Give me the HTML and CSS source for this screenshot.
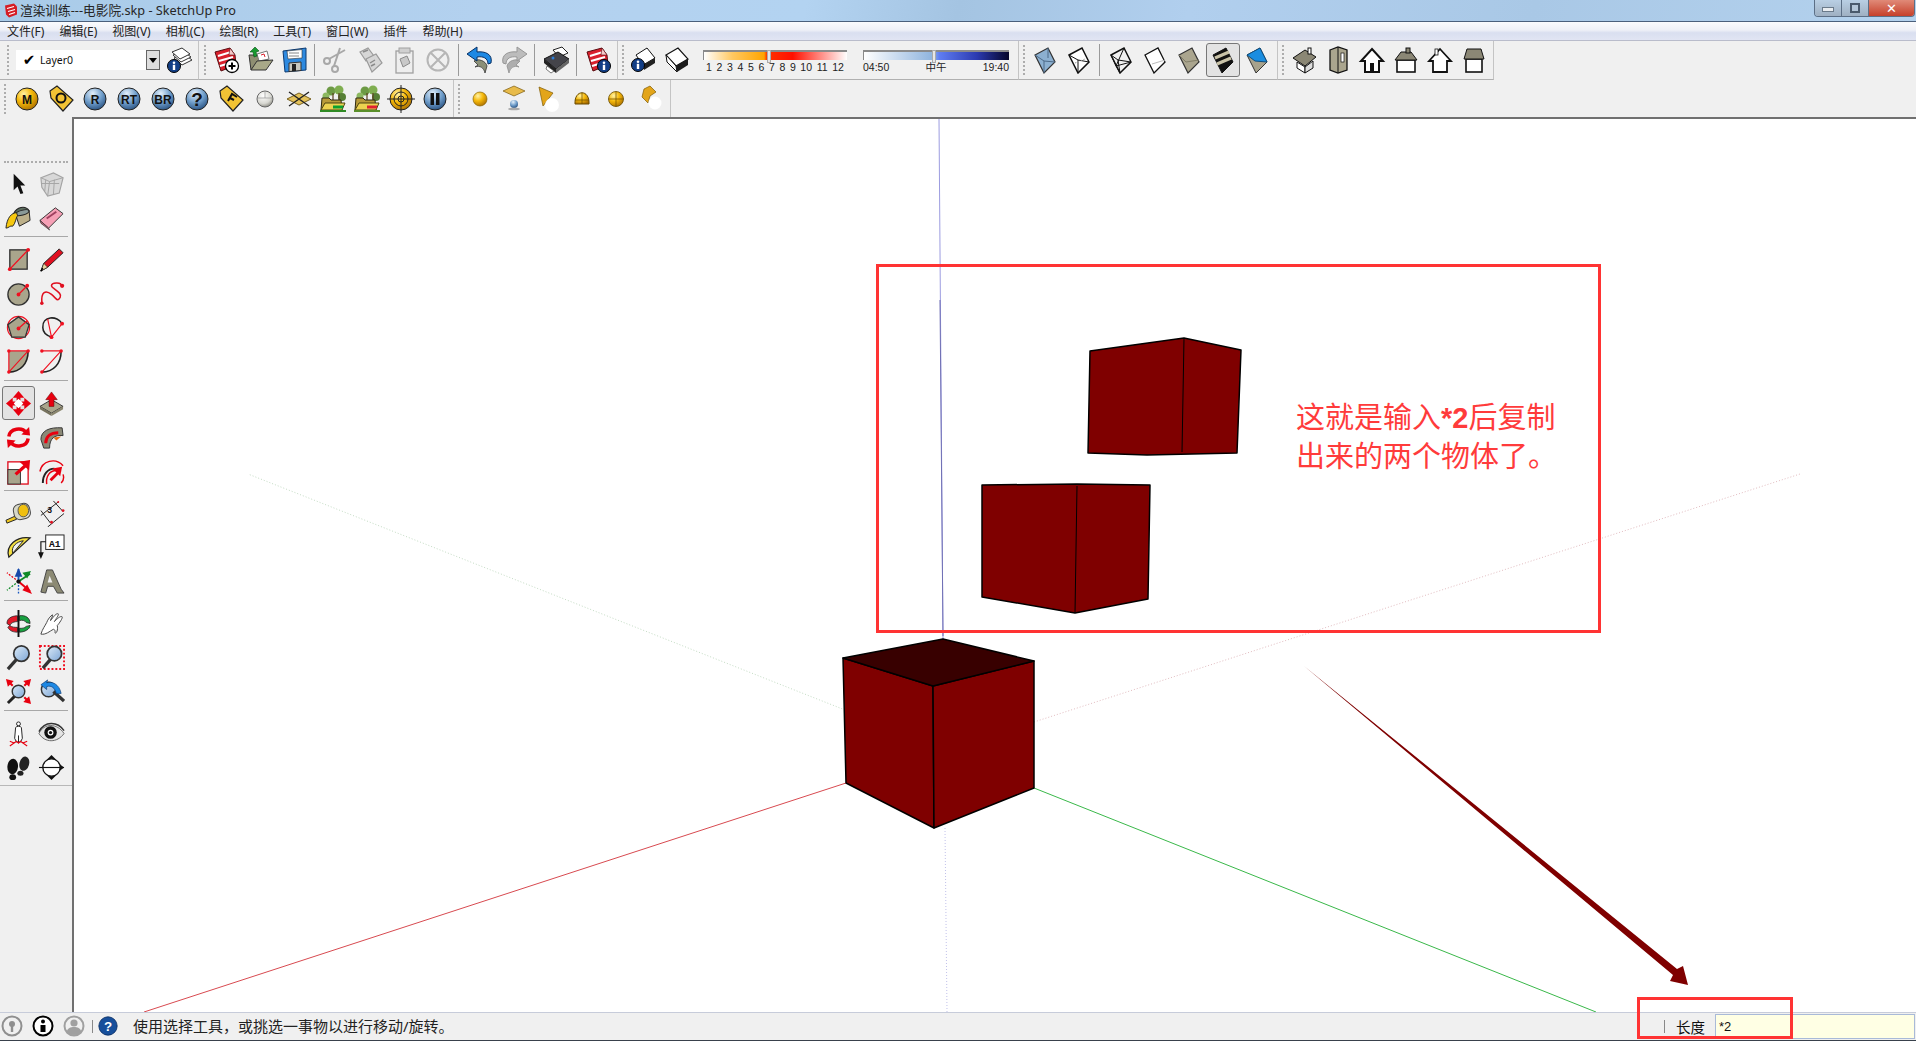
FILE: index.html
```html
<!DOCTYPE html>
<html lang="zh">
<head>
<meta charset="utf-8">
<title>渲染训练---电影院.skp - SketchUp Pro</title>
<link rel="stylesheet" href="styles.css">
</head>
<body>
<svg class="sprite" aria-hidden="true">
<defs>
<radialGradient id="gGold" cx=".35" cy=".28" r=".8"><stop offset="0" stop-color="#fff3a8"/><stop offset=".45" stop-color="#f6b90a"/><stop offset="1" stop-color="#a86c00"/></radialGradient>
<radialGradient id="gBlue" cx=".4" cy=".25" r=".85"><stop offset="0" stop-color="#e4f0fa"/><stop offset=".5" stop-color="#6f9dca"/><stop offset="1" stop-color="#1c4474"/></radialGradient>
<radialGradient id="gGray" cx=".4" cy=".3" r=".8"><stop offset="0" stop-color="#fff"/><stop offset=".6" stop-color="#d8d8d2"/><stop offset="1" stop-color="#77776e"/></radialGradient>
<linearGradient id="gLens" x1="0" y1="0" x2="1" y2="1"><stop offset="0" stop-color="#dcebf8"/><stop offset="1" stop-color="#7da6d6"/></linearGradient>
<g id="bi"><circle r="6.5" fill="#123e86" stroke="#000"/><circle cy="-3.2" r="1.3" fill="#fff"/><rect x="-1.2" y="-1.2" width="2.4" height="5.2" fill="#fff"/></g>
<g id="rdoc"><polygon points="3,6 18,2 23,9 24,19 9,25" fill="#d9202c" stroke="#5a0c10"/><path d="M6,10 19,6M7,15 21,11M8,20 21,16" stroke="#fff" stroke-width="2"/><polygon points="18,2 23,9 17,9" fill="#f5c9c9" stroke="#5a0c10" stroke-width=".6"/></g>
<g id="tree"><circle cx="12" cy="6" r="4.5" fill="#6d9a45"/><circle cx="20" cy="5" r="4.5" fill="#7fae50"/><circle cx="23" cy="12" r="4" fill="#567f35"/><circle cx="7" cy="11" r="3.5" fill="#8cb860"/><path d="M14,8v8M20,8v8" stroke="#5a4020" stroke-width="1.2"/><polygon points="2,25 3,13 10,13 12,15 22,15 23,25" fill="#b89a3a" stroke="#2c2810"/><polygon points="2,25 6,18 26,18 23,25" fill="#ecd250" stroke="#4d4410"/></g>

<symbol id="layers" viewBox="0 0 28 28"><g fill="#fff" stroke="#333"><polygon points="9,12 19,8 27,14 17,19"/><polygon points="8,9 18,5 26,11 16,16"/><polygon points="7,6 17,2 25,8 15,13"/></g><use href="#bi" x="9" y="20"/></symbol>
<symbol id="new" viewBox="0 0 28 28"><use href="#rdoc"/><circle cx="20" cy="20" r="6.5" fill="#fff" stroke="#000" stroke-width="1.3"/><path d="M20,16.5v7M16.5,20h7" stroke="#000" stroke-width="2"/></symbol>
<symbol id="open" viewBox="0 0 28 28"><polygon points="5,24 3,9 10,9 12,11 21,11 22,15 12,16" fill="#8f8f72" stroke="#333"/><polygon points="11,8 21,5 23,13 13,15" fill="#fff" stroke="#777"/><path d="M15,9l3-1 1,3" stroke="#d9202c" fill="none"/><polygon points="9,1 4,6 7,6 8,11 11,10 10,6 13,5" fill="#189a30" stroke="#084d14" stroke-width=".6"/><polygon points="5,24 11,15 27,14 20,24" fill="#a8a888" stroke="#333"/></symbol>
<symbol id="save" viewBox="0 0 28 28"><polygon points="3,5 26,2 26,24 5,26" fill="#2e8ae0" stroke="#0d3a70"/><polygon points="7,5 22,3.5 22,12 8,13" fill="#fff" stroke="#333" stroke-width=".6"/><path d="M9,7h10M9,10h10" stroke="#888"/><polygon points="9,17 21,16 21,24.5 9,25.5" fill="#c8c8c0" stroke="#333"/><rect x="12" y="18" width="4" height="7" fill="#222"/></symbol>
<symbol id="cut" viewBox="0 0 28 28"><g fill="none" stroke="#a8a8a8" stroke-width="2"><circle cx="5" cy="15" r="3"/><circle cx="13" cy="23" r="3"/><path d="M7,13 23,4M12,20 18,2"/></g></symbol>
<symbol id="copy" viewBox="0 0 28 28"><g fill="#d6d6d6" stroke="#9a9a9a" stroke-width="1.2"><polygon points="4,6 12,2 18,10 10,15"/><polygon points="10,13 20,8 26,17 16,26"/></g><path d="M7,6l5-2M14,17l5-3M15,20l4-2" stroke="#8a8a8a" stroke-width="1.4"/></symbol>
<symbol id="paste" viewBox="0 0 28 28"><rect x="6" y="5" width="17" height="22" fill="#eee" stroke="#a0a0a0" stroke-width="1.3"/><rect x="9" y="2" width="11" height="5" fill="#d0d0d0" stroke="#a0a0a0"/><polygon points="10,13 17,10 20,17 13,21" fill="#c8c8c8" stroke="#8a8a8a"/></symbol>
<symbol id="del" viewBox="0 0 28 28"><g fill="none" stroke="#b6b6b6" stroke-width="2"><circle cx="14" cy="14" r="10.5"/><path d="M7,7 21,21M21,7 7,21"/></g></symbol>
<symbol id="undo" viewBox="0 0 28 28"><path d="M8,15c4,-3 12,0 13,5l-2,7c-1,-5 -5,-8 -10,-6l3,-2z" fill="#8b9078" stroke="#333" stroke-width=".8"/><path d="M11,1 1,8l10,7 0,-4c6,-1 11,1 11,7l3,-1c2,-9 -6,-12 -14,-11z" fill="#1c88e4" stroke="#072f62"/></symbol>
<symbol id="redo" viewBox="0 0 28 28"><g transform="matrix(-1 0 0 1 28 0)"><path d="M8,15c4,-3 12,0 13,5l-2,7c-1,-5 -5,-8 -10,-6l3,-2z" fill="#aeaeae" stroke="#8e8e8e" stroke-width=".8"/><path d="M11,1 1,8l10,7 0,-4c6,-1 11,1 11,7l3,-1c2,-9 -6,-12 -14,-11z" fill="#bcbcbc" stroke="#969696"/></g></symbol>
<symbol id="print" viewBox="0 0 28 28"><polygon points="11,4 20,1 26,7 17,11" fill="#fff" stroke="#222"/><polygon points="2,13 16,6 27,13 14,23" fill="#44444a" stroke="#111"/><polygon points="2,13 14,23 14,27 2,17" fill="#222"/><polygon points="14,23 27,13 27,17 14,27" fill="#666"/><circle cx="11" cy="12" r="1.5" fill="#2c7ed8"/><polygon points="5,20 12,25 9,27 4,23" fill="#fff" stroke="#222" stroke-width=".6"/></symbol>
<symbol id="minfo" viewBox="0 0 28 28"><use href="#rdoc"/><use href="#bi" x="20" y="20"/></symbol>
<symbol id="boxi" viewBox="0 0 28 28"><polygon points="7,9 18,2 26,12 14,19" fill="#fff" stroke="#111"/><polygon points="14,19 26,12 26,17 15,24" fill="#222"/><use href="#bi" x="9" y="19"/></symbol>
<symbol id="boxw" viewBox="0 0 28 28"><polygon points="3,9 15,2 25,13 13,20" fill="#fff" stroke="#111" stroke-width="1.2"/><polygon points="3,9 13,20 14,26 4,16" fill="#fff" stroke="#111"/><polygon points="13,20 25,13 25,19 14,26" fill="#1c1c1c"/></symbol>

<symbol id="xray" viewBox="0 0 28 28"><polygon points="4,9 17,2 24,16 13,27" fill="#8cb0d0" stroke="#333" stroke-width="1.2"/><path d="M4,9 13,15 24,16M13,15 13,27M17,2 17,12" stroke="#4d6a88" fill="none"/></symbol>
<symbol id="back" viewBox="0 0 28 28"><polygon points="4,9 17,2 24,16 13,27" fill="#fff" stroke="#111" stroke-width="1.5"/><path d="M4,9 13,14M13,14 13,27M13,14 24,16" stroke="#111" fill="none"/><path d="M10,17 20,13" stroke="#999" stroke-dasharray="1.5 1.5"/></symbol>
<symbol id="wire" viewBox="0 0 28 28"><polygon points="4,9 17,2 24,16 13,27" fill="none" stroke="#111" stroke-width="1.5"/><path d="M4,9 11,14 24,16M11,14 13,27M17,2 9,20M4,9 9,20 13,27M9,20 24,16" stroke="#111" fill="none"/></symbol>
<symbol id="hidden" viewBox="0 0 28 28"><polygon points="4,9 17,2 24,16 13,27" fill="#fff" stroke="#111" stroke-width="1.3"/><path d="M11,18 24,14" stroke="#bbb"/></symbol>
<symbol id="shaded" viewBox="0 0 28 28"><polygon points="4,9 17,2 24,16 13,27" fill="#aaa58e" stroke="#333" stroke-width="1.2"/><path d="M4,9 11,16 24,14" stroke="#827e68" fill="none"/></symbol>
<symbol id="striped" viewBox="0 0 28 28"><polygon points="4,9 17,2 24,16 13,27" fill="#111" stroke="#111"/><path d="M6,12 20,6M8,18 22,12" stroke="#c9c3a8" stroke-width="3.2"/></symbol>
<symbol id="mono" viewBox="0 0 28 28"><polygon points="4,9 17,2 24,16 13,27" fill="#a7a28c" stroke="#333"/><polygon points="4,9 17,2 24,16 12,15" fill="#1a8de0" stroke="#0e4f80"/></symbol>

<symbol id="hiso" viewBox="0 0 28 28"><polygon points="7,16 15,21 15,27 7,22" fill="#fff" stroke="#111"/><polygon points="15,21 23,15 23,22 15,27" fill="#ddd" stroke="#111"/><polygon points="3,12 15,4 26,11 15,20" fill="#8b8775" stroke="#111"/><rect x="18" y="2" width="3" height="6" fill="#fff" stroke="#111"/></symbol>
<symbol id="hside" viewBox="0 0 28 28"><polygon points="6,4 14,1 23,4 23,24 14,27 6,24" fill="#aaa58e" stroke="#111" stroke-width="1.3"/><path d="M14,1v26" stroke="#111"/><rect x="17" y="7" width="3" height="9" fill="#fff" stroke="#111" stroke-width=".7"/></symbol>
<symbol id="hfront" viewBox="0 0 28 28"><polygon points="14,3 25,15 21,15 21,26 7,26 7,15 3,15" fill="#fff" stroke="#111" stroke-width="2"/><rect x="12" y="17" width="4" height="9" fill="#111"/></symbol>
<symbol id="hback" viewBox="0 0 28 28"><rect x="5" y="14" width="18" height="12" fill="#fff" stroke="#111" stroke-width="1.6"/><polygon points="3,14 9,6 19,6 25,14" fill="#8b8775" stroke="#111"/><rect x="14" y="2" width="4" height="5" fill="#8b8775" stroke="#111"/></symbol>
<symbol id="hleft" viewBox="0 0 28 28"><polygon points="14,3 25,15 21,15 21,26 7,26 7,15 3,15" fill="#fff" stroke="#111" stroke-width="1.8"/><rect x="9" y="3" width="3" height="6" fill="#fff" stroke="#111" stroke-width=".8"/></symbol>
<symbol id="hright" viewBox="0 0 28 28"><rect x="6" y="13" width="16" height="13" fill="#fff" stroke="#111" stroke-width="1.6"/><polygon points="4,13 7,3 21,3 24,13" fill="#8b8775" stroke="#111"/></symbol>

<symbol id="sM" viewBox="0 0 28 28"><circle cx="14" cy="14" r="11" fill="url(#gGold)" stroke="#222"/><text class="ict" x="14" y="19" text-anchor="middle">M</text></symbol>
<symbol id="sR" viewBox="0 0 28 28"><circle cx="14" cy="14" r="11" fill="url(#gBlue)" stroke="#222"/><text class="ict" x="14" y="19" text-anchor="middle">R</text></symbol>
<symbol id="sRT" viewBox="0 0 28 28"><circle cx="14" cy="14" r="11" fill="url(#gBlue)" stroke="#222"/><text class="ict" x="14" y="19" text-anchor="middle">RT</text></symbol>
<symbol id="sBR" viewBox="0 0 28 28"><circle cx="14" cy="14" r="11" fill="url(#gBlue)" stroke="#222"/><text class="ict" x="14" y="19" text-anchor="middle">BR</text></symbol>
<symbol id="sQ" viewBox="0 0 28 28"><circle cx="14" cy="14" r="11" fill="url(#gBlue)" stroke="#222"/><text class="ictq" x="14" y="21" text-anchor="middle">?</text></symbol>
<symbol id="tagO" viewBox="0 0 28 28"><polygon points="3,6 10,1 26,15 16,26 4,13" fill="#f2c334" stroke="#222" stroke-width="1.2"/><circle cx="14" cy="13" r="4.5" fill="none" stroke="#111" stroke-width="2"/></symbol>
<symbol id="tagF" viewBox="0 0 28 28"><polygon points="3,6 10,1 26,15 16,26 4,13" fill="#f2c334" stroke="#222" stroke-width="1.2"/><path d="M11,16 15,9 20,12M13,13l4,2" fill="none" stroke="#111" stroke-width="2"/></symbol>
<symbol id="sWhite" viewBox="0 0 28 28"><circle cx="14" cy="14" r="8" fill="url(#gGray)" stroke="#666"/><path d="M7,13h14M14,6v7" stroke="#999" stroke-width=".7"/></symbol>
<symbol id="plane" viewBox="0 0 28 28"><polygon points="2,14 14,8 26,14 14,20" fill="#e4c25a" stroke="#776020"/><path d="M4,7 24,21M24,7 4,21" stroke="#222" stroke-width="1.4"/></symbol>
<symbol id="treeG" viewBox="0 0 28 28"><use href="#tree"/><path d="M14,22h10" stroke="#0ca030" stroke-width="3"/><rect x="1" y="25" width="26" height="2" fill="#2f8a24"/></symbol>
<symbol id="treeR" viewBox="0 0 28 28"><use href="#tree"/><path d="M14,22h10" stroke="#e02030" stroke-width="3"/><rect x="1" y="25" width="26" height="2" fill="#5a8f2a"/></symbol>
<symbol id="target" viewBox="0 0 28 28"><circle cx="14" cy="14" r="11" fill="url(#gGold)" stroke="#222"/><g fill="none" stroke="#222"><circle cx="14" cy="14" r="7"/><circle cx="14" cy="14" r="3"/><path d="M14,0v28M0,14h28"/></g></symbol>
<symbol id="pause" viewBox="0 0 28 28"><circle cx="14" cy="14" r="11" fill="url(#gBlue)" stroke="#222"/><rect x="9.5" y="8" width="3.5" height="12" fill="#111"/><rect x="15" y="8" width="3.5" height="12" fill="#111"/></symbol>
<symbol id="ball" viewBox="0 0 28 28"><circle cx="14" cy="14" r="7" fill="url(#gGold)" stroke="#8a6400" stroke-width=".7"/></symbol>
<symbol id="diamond" viewBox="0 0 28 28"><polygon points="3,6 14,1 25,6 14,11" fill="#e8bb4a" stroke="#7a5a10" stroke-width=".7"/><circle cx="14" cy="19" r="4" fill="url(#gBlue)"/><ellipse cx="14" cy="24" rx="6" ry="1.3" fill="#aaa"/></symbol>
<symbol id="cone" viewBox="0 0 28 28"><polygon points="5,2 19,8 9,21" fill="#e3a51a" stroke="#7d5a05" stroke-width=".7"/><circle cx="18" cy="20" r="7" fill="#fff" opacity=".95"/></symbol>
<symbol id="dome" viewBox="0 0 28 28"><path d="M7,19c-1,-15 15,-15 14,0z" fill="url(#gGold)" stroke="#6a4c00"/><path d="M14,8v11M7,15h14" stroke="#6a4c00" stroke-width=".7"/></symbol>
<symbol id="grid" viewBox="0 0 28 28"><circle cx="14" cy="14" r="7.5" fill="url(#gGold)" stroke="#6a4c00" stroke-width=".8"/><path d="M14,6.5v15M6.5,14h15" stroke="#6a4c00" stroke-width=".7"/></symbol>
<symbol id="fold" viewBox="0 0 28 28"><polygon points="8,4 14,1 20,7 14,11 12,18 6,12" fill="#e3a51a" stroke="#7d5a05" stroke-width=".7"/><circle cx="19" cy="18" r="6.5" fill="#fff" opacity=".95"/></symbol>

<symbol id="select" viewBox="0 0 28 28"><polygon points="9,4 9,21 13,17 16,25 19,24 16,16 21,16" fill="#111"/></symbol>
<symbol id="comp" viewBox="0 0 28 28"><g fill="#d8d8d8" stroke="#a4a4a4" stroke-width="1.2"><polygon points="3,8 16,3 26,8 22,24 10,27 4,18"/></g><path d="M3,8 12,12 26,8M12,12 10,27M8,10 7,22M17,10 16,25M4,14 22,14" stroke="#a4a4a4" fill="none"/></symbol>
<symbol id="paint" viewBox="0 0 28 28"><path d="M9,10c3,-7 12,-9 16,-3l-2,3z" fill="#5e6e60" stroke="#222" stroke-width="1.2"/><polygon points="11,11 25,7 26,17 15,23" fill="#bcb08a" stroke="#222"/><ellipse cx="18" cy="9" rx="7" ry="2.5" fill="#8a9a98" stroke="#222" transform="rotate(-15 18 9)"/><path d="M12,9C7,9 2,14 1,25c3,0 4,-3 7,-2 3,-3 3,-8 5,-11z" fill="#f6c810" stroke="#222"/></symbol>
<symbol id="erase" viewBox="0 0 28 28"><polygon points="2,17 18,4 26,10 11,25" fill="#f6a0b6" stroke="#333"/><polygon points="2,17 11,25 12,27 3,20" fill="#c86880" stroke="#333" stroke-width=".7"/><path d="M9,15 19,8" stroke="#a04060" stroke-width="2"/></symbol>
<symbol id="rect" viewBox="0 0 28 28"><rect x="5" y="4" width="18" height="20" fill="#a9a58c" stroke="#333" stroke-width="1.4"/><path d="M5,24 24,4" stroke="#f01020" stroke-width="1.4"/><circle cx="5" cy="24" r="2" fill="#f01020"/><circle cx="24" cy="4" r="2" fill="#f01020"/></symbol>
<symbol id="pencil" viewBox="0 0 28 28"><polygon points="3,26 6,18 22,3 26,7 10,22" fill="#e01020" stroke="#222"/><polygon points="3,26 6,18 10,22" fill="#e8d6a0" stroke="#222" stroke-width=".7"/><path d="M3,26l2,-3" stroke="#000" stroke-width="1.4"/></symbol>
<symbol id="circle" viewBox="0 0 28 28"><circle cx="14" cy="15" r="11" fill="#a9a58c" stroke="#333" stroke-width="1.4"/><path d="M14,15 23,6" stroke="#f01020" stroke-width="1.4"/><circle cx="14" cy="15" r="2" fill="#f01020"/><circle cx="23" cy="6" r="2" fill="#f01020"/></symbol>
<symbol id="free" viewBox="0 0 28 28"><path d="M4,24c-1,-12 4,-14 10,-9s6,8 9,3 -9,-9 -9,-12 10,-5 11,1" fill="none" stroke="#e01020" stroke-width="1.6"/><circle cx="4" cy="24" r="1.8" fill="#e01020"/><circle cx="25" cy="6" r="2.2" fill="#e01020"/></symbol>
<symbol id="poly" viewBox="0 0 28 28"><circle cx="14" cy="14" r="11.5" fill="none" stroke="#f01020" stroke-width="1.2"/><polygon points="14,3 25,11 21,24 7,24 3,11" fill="#a9a58c" stroke="#333" stroke-width="1.4"/><path d="M14,15 23,7" stroke="#f01020" stroke-width="1.4"/><circle cx="14" cy="15" r="2" fill="#f01020"/></symbol>
<symbol id="arc" viewBox="0 0 28 28"><path d="M25,10C20,1 4,2 5,14c0,4 3,8 9,10" fill="none" stroke="#222" stroke-width="1.6"/><path d="M14,24 10,5M14,24 25,10" stroke="#f01020" stroke-width="1.2"/><circle cx="14" cy="24" r="2" fill="#f01020"/><circle cx="25" cy="10" r="2" fill="#f01020"/></symbol>
<symbol id="pie" viewBox="0 0 28 28"><path d="M4,3 24,3C24,16 16,25 4,25z" fill="#a9a58c"/><path d="M24,3C24,16 16,25 4,25" fill="none" stroke="#222" stroke-width="1.6"/><path d="M4,3H24L4,25V3" fill="none" stroke="#f01020" stroke-width="1.2"/><circle cx="4" cy="3" r="1.8" fill="#f01020"/><circle cx="24" cy="3" r="1.8" fill="#f01020"/><circle cx="4" cy="25" r="1.8" fill="#f01020"/></symbol>
<symbol id="arc2" viewBox="0 0 28 28"><path d="M24,3C24,16 16,25 4,25" fill="none" stroke="#222" stroke-width="1.6"/><path d="M4,3H24L4,25" fill="none" stroke="#f01020" stroke-width="1.2"/><circle cx="4" cy="3" r="1.8" fill="#f01020"/><circle cx="24" cy="3" r="1.8" fill="#f01020"/><circle cx="4" cy="25" r="1.8" fill="#f01020"/></symbol>
<symbol id="move" viewBox="0 0 28 28"><polygon points="14,9 19,14 14,19 9,14" fill="#fff"/><g fill="#e80010"><polygon points="14,1 20,8 16,8 16,11 14,9 12,11 12,8 8,8"/><polygon points="14,27 20,20 16,20 16,17 14,19 12,17 12,20 8,20"/><polygon points="1,14 8,8 8,12 11,12 9,14 11,16 8,16 8,20"/><polygon points="27,14 20,8 20,12 17,12 19,14 17,16 20,16 20,20"/></g></symbol>
<symbol id="push" viewBox="0 0 28 28"><polygon points="2,17 14,10 26,17 14,24" fill="#a9a58c" stroke="#333"/><polygon points="2,17 14,24 14,27 2,20" fill="#77735e"/><polygon points="14,24 26,17 26,20 14,27" fill="#8a866e"/><polygon points="14,2 20,10 16.5,10 16.5,17 11.5,17 11.5,10 8,10" fill="#e80010" stroke="#500" stroke-width=".5"/></symbol>
<symbol id="rotate" viewBox="0 0 28 28"><g fill="none" stroke="#e80010" stroke-width="3.6"><path d="M4,13c1,-9 14,-10 18,-4"/><path d="M24,15c-1,9 -14,10 -18,4"/></g><polygon points="17,11 26,12 25,3" fill="#e80010"/><polygon points="11,17 2,16 3,25" fill="#e80010"/></symbol>
<symbol id="follow" viewBox="0 0 28 28"><path d="M3,16c0,-9 9,-13 22,-12l1,8c-9,-1 -14,3 -14,13l-6,0z" fill="#8b8976" stroke="#333"/><path d="M8,20c0,-7 5,-11 13,-11" fill="none" stroke="#e80010" stroke-width="3"/><polygon points="16,14 24,13 19,17" fill="#e86a10"/></symbol>
<symbol id="scale" viewBox="0 0 28 28"><rect x="3" y="4" width="21" height="23" fill="#fff" stroke="#e01020" stroke-width="1.4"/><rect x="3" y="12" width="13" height="15" fill="#a9a58c" stroke="#333"/><path d="M11,17 21,8" stroke="#e80010" stroke-width="3.4"/><polygon points="15,4 26,2 25,13" fill="#e80010"/></symbol>
<symbol id="offset" viewBox="0 0 28 28"><path d="M2,14C4,3 18,-1 26,8M9,27c-1,-8 3,-14 10,-14" fill="none" stroke="#e80010" stroke-width="1.5"/><path d="M5,26C5,17 10,11 17,11" fill="none" stroke="#222" stroke-width="2"/><path d="M13,23 21,15" stroke="#e80010" stroke-width="3"/><polygon points="15,11 25,9 23,19" fill="#e80010"/><path d="M24,26c3,-3 3,-6 2,-9" fill="none" stroke="#e80010" stroke-width="1.5"/></symbol>
<symbol id="tape" viewBox="0 0 28 28"><path d="M2,24 12,20 12,16 1,21z" fill="#f0c820" stroke="#222"/><rect x="9" y="4" width="17" height="16" rx="6" fill="#d8d8c8" stroke="#444" transform="rotate(-12 17 12)"/><ellipse cx="19" cy="11" rx="5.5" ry="6.5" fill="#f0c010" stroke="#555"/></symbol>
<symbol id="dim" viewBox="0 0 28 28"><path d="M3,16 21,2M3,11 13,24M16,1 26,12M10,28 27,14" stroke="#222" stroke-width="1" fill="none"/><circle cx="21" cy="2" r="1" fill="#e01020"/><circle cx="26" cy="11" r="1.5" fill="#e01020"/><circle cx="14" cy="23" r="1.5" fill="#e01020"/><text class="ictd" x="12" y="13" text-anchor="middle">3</text></symbol>
<symbol id="prot" viewBox="0 0 28 28"><path d="M4,24C0,12 12,2 26,4z" fill="#f5e040" stroke="#222" stroke-width="1.3"/><path d="M8,20C6,13 12,8 19,7z" fill="#f0f0f0" stroke="#222"/></symbol>
<symbol id="label" viewBox="0 0 28 28"><rect x="8" y="1" width="19" height="15" fill="#fff" stroke="#222"/><text class="ictm" x="17.5" y="13" text-anchor="middle">A1</text><path d="M8,8H3V21" fill="none" stroke="#111" stroke-width="1.2"/><polygon points="0,19 6,19 3,26" fill="#111"/></symbol>
<symbol id="axes" viewBox="0 0 28 28"><path d="M14,14V1" stroke="#1858c0" stroke-width="2"/><polygon points="14,0 10,9 18,9" fill="#1848a8"/><path d="M14,14 26,6" stroke="#108a28" stroke-width="2"/><polygon points="27,3 18,5 23,11" fill="#108a28"/><path d="M14,14 26,24" stroke="#e80010" stroke-width="2"/><polygon points="28,27 18,23 23,17" fill="#e80010"/><g stroke-width="1.4" stroke-dasharray="2 1.5"><path d="M14,14V27" stroke="#1858c0"/><path d="M14,14 2,23" stroke="#108a28"/><path d="M14,14 2,5" stroke="#e80010"/></g><circle cx="14" cy="14" r="2.2" fill="#111"/></symbol>
<symbol id="txt3d" viewBox="0 0 28 28"><polygon points="9,2 15,2 24,22 27,26 20,26 16,19 10,19 8,26 3,25" fill="#8c8a74" stroke="#444"/><polygon points="12,8 10,15 15,15" fill="#eee"/></symbol>
<symbol id="orbit" viewBox="0 0 28 28"><path d="M2,14c0,-7 8,-8 11,-8v6c-3,0 -7,1 -8,4z" fill="#e01828" stroke="#222" stroke-width=".8"/><path d="M15,6c6,-1 11,2 11,8l-4,-1c-1,-2 -4,-3 -7,-2z" fill="#18a040" stroke="#222" stroke-width=".8"/><path d="M3,18c2,4 6,5 10,5v-5c-3,0 -6,0 -8,-2z" fill="#e01828" stroke="#222" stroke-width=".8"/><path d="M15,23c5,0 11,-3 11,-7l-4,1c-2,2 -4,2 -7,2z" fill="#18a040" stroke="#222" stroke-width=".8"/><path d="M14,0V28" stroke="#111" stroke-width="2"/></symbol>
<symbol id="hand" viewBox="0 0 28 28"><path d="M3,25c2,-6 4,-8 6,-12 1,-3 4,-7 6,-8 1,1 -2,4 -2,6 3,-4 6,-8 8,-7 1,1 -3,6 -4,8 3,-3 6,-6 8,-5 1,1 -3,7 -5,9 1,5 -1,8 -2,8 -1,-1 1,-3 -2,-4 -4,2 -8,6 -13,5z" fill="#fff" stroke="#444"/></symbol>
<symbol id="zoom" viewBox="0 0 28 28"><path d="M3,26 12,16" stroke="#333" stroke-width="3.4"/><circle cx="17" cy="10" r="8" fill="url(#gLens)" stroke="#333" stroke-width="1.8"/></symbol>
<symbol id="zoomw" viewBox="0 0 28 28"><rect x="2" y="2" width="25" height="24" fill="none" stroke="#f01020" stroke-width="2" stroke-dasharray="2 2"/><path d="M5,25 13,16" stroke="#333" stroke-width="3.4"/><circle cx="17" cy="10" r="7.5" fill="url(#gLens)" stroke="#333" stroke-width="1.8"/></symbol>
<symbol id="extents" viewBox="0 0 28 28"><path d="M3,26 11,18" stroke="#222" stroke-width="3"/><circle cx="14" cy="14" r="6.5" fill="url(#gLens)" stroke="#333" stroke-width="1.5"/><g fill="#e80010"><polygon points="1,1 9,3 3,9"/><polygon points="27,1 25,9 19,3"/><polygon points="27,27 19,25 25,19"/></g><path d="M3,3 8,8M25,3 20,8M25,25 20,20" stroke="#e80010" stroke-width="2.2"/></symbol>
<symbol id="prev" viewBox="0 0 28 28"><circle cx="11" cy="12" r="7.5" fill="url(#gLens)" stroke="#333" stroke-width="1.5"/><path d="M27,24 16,14" stroke="#333" stroke-width="3.4"/><path d="M24,16C22,6 14,3 9,5l1,-3 -7,5 6,5 0,-3c5,-2 9,2 10,7z" fill="#1c88e4" stroke="#0c3c78" stroke-width=".7"/></symbol>
<symbol id="walk" viewBox="0 0 28 28"><circle cx="14" cy="4" r="2" fill="#fff" stroke="#222"/><path d="M11,8c0,-2 6,-2 6,0l1,11 -2,4 h-4l-2,-4z" fill="#fff" stroke="#222"/><path d="M14,16v7" stroke="#222"/><path d="M5,27 12,22 14,24 16,22 23,27M10,24 5,22M18,24 23,22" fill="none" stroke="#e80010" stroke-width="1.1"/></symbol>
<symbol id="eye" viewBox="0 0 28 28"><path d="M1,14C6,3 20,3 27,14 20,24 7,24 1,14z" fill="#e4e4e4" stroke="#666"/><path d="M1,12C7,1 20,1 27,11" fill="none" stroke="#333" stroke-width="1.5"/><circle cx="13" cy="13" r="6.5" fill="#111"/><circle cx="13" cy="13" r="3" fill="#fff"/><circle cx="13" cy="13" r="1.7" fill="#111"/></symbol>
<symbol id="feet" viewBox="0 0 28 28"><ellipse cx="8" cy="13" rx="5.5" ry="8" fill="#111" transform="rotate(5 8 13)"/><ellipse cx="8" cy="24" rx="3.5" ry="3" fill="#111"/><ellipse cx="20" cy="10" rx="5" ry="7.5" fill="#222" transform="rotate(15 20 10)"/><ellipse cx="16" cy="20" rx="3.2" ry="2.6" fill="#222"/></symbol>
<symbol id="section" viewBox="0 0 28 28"><polygon points="14,1 20,7 8,7" fill="#111"/><polygon points="14,27 20,21 8,21" fill="#111"/><polygon points="27,14 22,10 22,18" fill="#111"/><circle cx="14" cy="14" r="9" fill="#fff" stroke="#111" stroke-width="1.4"/><path d="M1,14H27" stroke="#111" stroke-width="1.2"/></symbol>

<symbol id="pinS" viewBox="0 0 24 24"><circle cx="12" cy="12" r="9.5" fill="#f0f0f0" stroke="#8f8f8f" stroke-width="2"/><circle cx="12" cy="10" r="3" fill="#8f8f8f"/><rect x="10.8" y="10" width="2.4" height="8" fill="#8f8f8f"/></symbol>
<symbol id="infoS" viewBox="0 0 24 24"><circle cx="12" cy="12" r="9.5" fill="#fff" stroke="#000" stroke-width="2"/><circle cx="12" cy="7.5" r="2" fill="#000"/><path d="M9.5,11h5v7h-5z" fill="#000"/></symbol>
<symbol id="userS" viewBox="0 0 24 24"><circle cx="12" cy="12" r="9.5" fill="#f0f0f0" stroke="#a0a0a0" stroke-width="2"/><circle cx="12" cy="9" r="3.6" fill="#a0a0a0"/><path d="M4.5,18c1,-4 4,-5 7.5,-5s6.500,1 7.500,5c-4,4 -11,4 -15,0z" fill="#a0a0a0"/></symbol>
<symbol id="helpS" viewBox="0 0 24 24"><circle cx="12" cy="12" r="11" fill="#174f9b" stroke="#0b2e63"/><text class="icth" x="12" y="17.5" text-anchor="middle">?</text></symbol>
<symbol id="logo" viewBox="0 0 16 16"><polygon points="2,3 11,1 14,4 14,12 6,15 3,12" fill="#d51d25"/><path d="M4,6 11,4M5,9 12,7M6,12 12,10" stroke="#fff" stroke-width="1.3"/></symbol>
</defs>
</svg>

<div class="window">
  <header class="titlebar">
    <svg class="logo"><use href="#logo"/></svg>
    <span class="title-text">渲染训练---电影院.skp - SketchUp Pro</span>
    <div class="winctl">
      <span class="wbtn wmin"><i class="gmin"></i></span>
      <span class="wbtn wmax"><i class="gmax"></i></span>
      <span class="wbtn wclose">✕</span>
    </div>
  </header>

  <nav class="menubar">
    <span class="mi">文件(F)</span><span class="mi">编辑(E)</span><span class="mi">视图(V)</span><span class="mi">相机(C)</span><span class="mi">绘图(R)</span><span class="mi">工具(T)</span><span class="mi">窗口(W)</span><span class="mi">插件</span><span class="mi">帮助(H)</span>
  </nav>

  <div class="tbrow tbrow1">
    <div class="seg seg-layer">
      <i class="grip grip-layer"></i>
      <div class="layerbox"><span class="check">✔</span><span class="layername">Layer0</span><span class="drop"><i class="caret"></i></span></div>
      <span class="tool tool-tight"><svg class="ic"><use href="#layers"/></svg></span>
    </div>
    <div class="seg seg-main">
      <i class="grip"></i>
      <span class="tool"><svg class="ic"><use href="#new"/></svg></span>
      <span class="tool"><svg class="ic"><use href="#open"/></svg></span>
      <span class="tool"><svg class="ic"><use href="#save"/></svg></span>
      <i class="vsep"></i>
      <span class="tool"><svg class="ic"><use href="#cut"/></svg></span>
      <span class="tool"><svg class="ic"><use href="#copy"/></svg></span>
      <span class="tool"><svg class="ic"><use href="#paste"/></svg></span>
      <span class="tool"><svg class="ic"><use href="#del"/></svg></span>
      <i class="vsep"></i>
      <span class="tool"><svg class="ic"><use href="#undo"/></svg></span>
      <span class="tool"><svg class="ic"><use href="#redo"/></svg></span>
      <i class="vsep"></i>
      <span class="tool"><svg class="ic"><use href="#print"/></svg></span>
      <i class="vsep"></i>
      <span class="tool"><svg class="ic"><use href="#minfo"/></svg></span>
    </div>
    <div class="seg seg-shadow">
      <i class="grip"></i>
      <span class="tool"><svg class="ic"><use href="#boxi"/></svg></span>
      <span class="tool"><svg class="ic"><use href="#boxw"/></svg></span>
      <div class="slider slider-date">
        <div class="track track-date"><i class="thumb thumb-date"></i></div>
        <div class="ticks"><span>1</span><span>2</span><span>3</span><span>4</span><span>5</span><span>6</span><span>7</span><span>8</span><span>9</span><span>10</span><span>11</span><span>12</span></div>
      </div>
      <div class="slider slider-time">
        <div class="track track-time"><i class="thumb thumb-time"></i></div>
        <div class="ticks"><span>04:50</span><span>中午</span><span>19:40</span></div>
      </div>
    </div>
    <div class="seg seg-style">
      <i class="grip"></i>
      <span class="tool"><svg class="ic"><use href="#xray"/></svg></span>
      <span class="tool"><svg class="ic"><use href="#back"/></svg></span>
      <i class="vsep"></i>
      <span class="tool"><svg class="ic"><use href="#wire"/></svg></span>
      <span class="tool"><svg class="ic"><use href="#hidden"/></svg></span>
      <span class="tool"><svg class="ic"><use href="#shaded"/></svg></span>
      <span class="tool pressed"><svg class="ic"><use href="#striped"/></svg></span>
      <span class="tool"><svg class="ic"><use href="#mono"/></svg></span>
    </div>
    <div class="seg seg-views">
      <i class="grip"></i>
      <span class="tool"><svg class="ic"><use href="#hiso"/></svg></span>
      <span class="tool"><svg class="ic"><use href="#hside"/></svg></span>
      <span class="tool"><svg class="ic"><use href="#hfront"/></svg></span>
      <span class="tool"><svg class="ic"><use href="#hback"/></svg></span>
      <span class="tool"><svg class="ic"><use href="#hleft"/></svg></span>
      <span class="tool"><svg class="ic"><use href="#hright"/></svg></span>
    </div>
  </div>

  <div class="tbrow tbrow2">
    <div class="seg seg-render">
      <i class="grip grip-b"></i>
      <span class="tool"><svg class="ic"><use href="#sM"/></svg></span>
      <span class="tool"><svg class="ic"><use href="#tagO"/></svg></span>
      <span class="tool"><svg class="ic"><use href="#sR"/></svg></span>
      <span class="tool"><svg class="ic"><use href="#sRT"/></svg></span>
      <span class="tool"><svg class="ic"><use href="#sBR"/></svg></span>
      <span class="tool"><svg class="ic"><use href="#sQ"/></svg></span>
      <span class="tool"><svg class="ic"><use href="#tagF"/></svg></span>
      <span class="tool"><svg class="ic"><use href="#sWhite"/></svg></span>
      <span class="tool"><svg class="ic"><use href="#plane"/></svg></span>
      <span class="tool"><svg class="ic"><use href="#treeG"/></svg></span>
      <span class="tool"><svg class="ic"><use href="#treeR"/></svg></span>
      <span class="tool"><svg class="ic"><use href="#target"/></svg></span>
      <span class="tool"><svg class="ic"><use href="#pause"/></svg></span>
    </div>
    <div class="seg seg-lights">
      <i class="grip"></i>
      <span class="tool"><svg class="ic"><use href="#ball"/></svg></span>
      <span class="tool"><svg class="ic"><use href="#diamond"/></svg></span>
      <span class="tool"><svg class="ic"><use href="#cone"/></svg></span>
      <span class="tool"><svg class="ic"><use href="#dome"/></svg></span>
      <span class="tool"><svg class="ic"><use href="#grid"/></svg></span>
      <span class="tool"><svg class="ic"><use href="#fold"/></svg></span>
    </div>
  </div>

  <main class="main">
    <aside class="lefttools">
      <i class="hgrip"></i>
      <div class="lgrid">
        <span class="ltool"><svg class="ic"><use href="#select"/></svg></span><span class="ltool"><svg class="ic"><use href="#comp"/></svg></span>
        <span class="ltool"><svg class="ic"><use href="#paint"/></svg></span><span class="ltool"><svg class="ic"><use href="#erase"/></svg></span>
      </div>
      <i class="lsep"></i>
      <div class="lgrid">
        <span class="ltool"><svg class="ic"><use href="#rect"/></svg></span><span class="ltool"><svg class="ic"><use href="#pencil"/></svg></span>
        <span class="ltool"><svg class="ic"><use href="#circle"/></svg></span><span class="ltool"><svg class="ic"><use href="#free"/></svg></span>
        <span class="ltool"><svg class="ic"><use href="#poly"/></svg></span><span class="ltool"><svg class="ic"><use href="#arc"/></svg></span>
        <span class="ltool"><svg class="ic"><use href="#pie"/></svg></span><span class="ltool"><svg class="ic"><use href="#arc2"/></svg></span>
      </div>
      <i class="lsep"></i>
      <div class="lgrid">
        <span class="ltool pressed"><svg class="ic"><use href="#move"/></svg></span><span class="ltool"><svg class="ic"><use href="#push"/></svg></span>
        <span class="ltool"><svg class="ic"><use href="#rotate"/></svg></span><span class="ltool"><svg class="ic"><use href="#follow"/></svg></span>
        <span class="ltool"><svg class="ic"><use href="#scale"/></svg></span><span class="ltool"><svg class="ic"><use href="#offset"/></svg></span>
      </div>
      <i class="lsep"></i>
      <div class="lgrid">
        <span class="ltool"><svg class="ic"><use href="#tape"/></svg></span><span class="ltool"><svg class="ic"><use href="#dim"/></svg></span>
        <span class="ltool"><svg class="ic"><use href="#prot"/></svg></span><span class="ltool"><svg class="ic"><use href="#label"/></svg></span>
        <span class="ltool"><svg class="ic"><use href="#axes"/></svg></span><span class="ltool"><svg class="ic"><use href="#txt3d"/></svg></span>
      </div>
      <i class="lsep"></i>
      <div class="lgrid">
        <span class="ltool"><svg class="ic"><use href="#orbit"/></svg></span><span class="ltool"><svg class="ic"><use href="#hand"/></svg></span>
        <span class="ltool"><svg class="ic"><use href="#zoom"/></svg></span><span class="ltool"><svg class="ic"><use href="#zoomw"/></svg></span>
        <span class="ltool"><svg class="ic"><use href="#extents"/></svg></span><span class="ltool"><svg class="ic"><use href="#prev"/></svg></span>
      </div>
      <i class="lsep"></i>
      <div class="lgrid">
        <span class="ltool"><svg class="ic"><use href="#walk"/></svg></span><span class="ltool"><svg class="ic"><use href="#eye"/></svg></span>
        <span class="ltool"><svg class="ic"><use href="#feet"/></svg></span><span class="ltool"><svg class="ic"><use href="#section"/></svg></span>
      </div>
      <i class="lend"></i>
    </aside>

    <section class="canvas">
      <svg class="scene" viewBox="74 119 1842 893">
        <g class="axes">
          <path class="ax-blue" d="M939,119 943,639"/>
          <path class="ax-blue-dark" d="M940,300 943,636"/>
          <path class="ax-blue-dot" d="M945,828 947,1012"/>
          <path class="ax-red" d="M846,783 144,1012"/>
          <path class="ax-red-dot" d="M1034,722 1800,474"/>
          <path class="ax-green" d="M1034,788 1596,1012"/>
          <path class="ax-green-dot" d="M845,710 248,474"/>
        </g>
        <g class="cube">
          <polygon class="face" points="1090,351 1184,338 1241,350 1237,453 1147,455 1088,453"/>
          <path class="edge" d="M1184,338 1182,452"/>
          <polygon class="face" points="982,485 1077,484 1150,485 1148,599 1075,613 982,597"/>
          <path class="edge" d="M1077,486 1075,613"/>
          <polygon class="face" points="843,658 933,686 934,828 846,783"/>
          <polygon class="face" points="933,686 1034,661 1034,788 934,828"/>
          <polygon class="top" points="843,658 943,639 1034,661 933,686"/>
        </g>
        <rect class="callout" x="877.5" y="265.5" width="722" height="366"/>
        <polygon class="arrow" points="1304,666 1677,969 1683,966 1688,985 1670,981 1673,975"/>
      </svg>
      <p class="note">这就是输入<b>*2</b>后复制<br>出来的两个物体了。</p>
    </section>
  </main>

  <footer class="statusbar">
    <svg class="sicon"><use href="#pinS"/></svg>
    <svg class="sicon"><use href="#infoS"/></svg>
    <svg class="sicon"><use href="#userS"/></svg>
    <i class="ssep"></i>
    <svg class="shelp"><use href="#helpS"/></svg>
    <span class="stext">使用选择工具，或挑选一事物以进行移动/旋转。</span>
    <div class="vcb">
      <i class="ssep"></i>
      <span class="vcb-label">长度</span>
      <span class="vcb-input">*2</span>
    </div>
  </footer>

  <div class="vcb-callout"></div>
</div>
</body>
</html>
```
FILE: styles.css
```css
* { box-sizing: border-box; }
html, body { margin: 0; height: 100%; overflow: hidden; }
body {
  font-family: "Noto Sans", "Noto Sans CJK SC", sans-serif;
  color: #1c1c1c;
  background: #f0f0f0;
}
i { display: block; font-style: normal; }
.sprite { position: absolute; width: 0; height: 0; }

.window {
  position: relative;
  display: flex;
  flex-direction: column;
  height: 1041px;
  width: 1916px;
}

/* title bar */
.titlebar {
  display: flex;
  align-items: flex-start;
  height: 22px;
  flex: none;
  border-bottom: 1px solid #4b607c;
  background: linear-gradient(100deg, #a9cbe8 0%, #b3d1ef 25%, #b3d3f1 42%, #a4c4e2 50%, #b1cfee 62%, #a9c8e6 80%, #b4d2ee 100%);
}
.logo { width: 16px; height: 17px; margin: 2px 0 0 3px; flex: none; }
.title-text { font-size: 12.7px; line-height: 20px; margin-left: 1px; color: #262626; }
.winctl {
  display: flex;
  height: 17px;
  margin-left: auto;
  margin-right: 1px;
  border: 1px solid #5c6f86;
  border-top: 0;
  border-radius: 0 0 4px 4px;
  overflow: hidden;
}
.wbtn { display: flex; align-items: center; justify-content: center; height: 100%; }
.wmin, .wmax {
  width: 27px;
  background: linear-gradient(#b9cfe4, #9fb0c2);
  border-right: 1px solid #5c6f86;
}
.gmin { width: 12px; height: 5px; background: #e8ecf0; border: 1px solid #6a7a8a; margin-top: 2px; }
.gmax { width: 10px; height: 10px; background: #b4c6d8; border: 2px solid #4a5a6c; }
.wclose {
  width: 45px;
  background: linear-gradient(#e08a78, #c6402a);
  color: #fff;
  font: bold 13px "DejaVu Sans", sans-serif;
}

/* menu */
.menubar {
  display: flex;
  align-items: center;
  height: 19px;
  flex: none;
  padding-top: 2px;
  background: linear-gradient(#fafbfd 0%, #eef0f7 45%, #d9dff0 60%, #e1e5f3 100%);
  border-bottom: 1px solid #b9bccb;
}
.mi { font-size: 12px; padding: 0 7.5px; white-space: nowrap; line-height: 16px; color: #222; }
.mi:first-child { padding-left: 7px; }

/* toolbars */
.tbrow { display: flex; flex: none; background: #f0f0f0; }
.tbrow1 { height: 39px; }
.tbrow2 { height: 37px; }
.seg {
  display: flex;
  align-items: center;
  height: 100%;
  border-right: 1px solid #c4c4c4;
  border-bottom: 1px solid #b0b0b0;
}
.tbrow2 .seg { border-bottom: 0; }
.seg-layer { width: 199px; }
.seg-main { width: 419px; padding-right: 3px; }
.seg-shadow { width: 401px; }
.seg-style { width: 259px; }
.seg-views { width: 216px; }
.seg-render { width: 454px; }
.seg-lights { width: 217px; }

.grip {
  width: 0;
  height: 30px;
  margin: 0 3px 0 4px;
  border-left: 2px dotted #adadad;
  flex: none;
}
.grip-layer { margin: 0 7px; }
.grip-b { margin-right: 4px; }
.seg-shadow .grip { margin-right: 2px; }
.tool {
  display: flex;
  align-items: center;
  justify-content: center;
  width: 34px;
  height: 34px;
  flex: none;
}
.tool-tight { margin-left: 2px; }
.tool.pressed, .ltool.pressed {
  background: #e3e3e3;
  border: 1px solid #777;
  border-radius: 3px;
}
.ic { width: 28px; height: 28px; display: block; flex: none; }
.vsep {
  width: 1px;
  height: 32px;
  margin: 0 4px 0 3px;
  background: #9a9a9a;
  flex: none;
}
.seg-main .grip { margin-left: 5px; margin-right: 3px; }

/* layer box */
.layerbox { display: flex; align-items: center; width: 144px; height: 20px; background: #fff; flex: none; }
.check { width: 22px; text-align: center; font: 15px "DejaVu Sans", sans-serif; color: #000; padding-left: 4px; }
.layername { flex: 1; padding-left: 2px; font-size: 10.5px; color: #111; }
.drop {
  display: flex;
  justify-content: center;
  align-items: center;
  width: 14px;
  height: 20px;
  background: #dedede;
  border: 1px solid #666;
}
.caret { width: 0; height: 0; border: 4px solid transparent; border-top: 5px solid #000; border-bottom: 0; }

/* sliders */
.slider { display: flex; flex-direction: column; flex: none; margin-top: 2px; }
.slider-date { width: 144px; margin-left: 9px; }
.slider-time { width: 146px; margin-left: 16px; }
.track {
  position: relative;
  height: 10px;
  border-top: 2px solid #8a8a8a;
  border-left: 1px solid #8a8a8a;
}
.track-date { background: linear-gradient(90deg, #fff 0%, #ffc860 20%, #ffa500 42%, #ff3300 44%, #ff1000 62%, #ffffff 100%); }
.track-time { background: linear-gradient(90deg, #fff 0%, #8fb4de 47%, #5f7df2 52%, #2b3ab0 78%, #05052a 100%); }
.thumb { position: absolute; top: -2px; width: 4px; height: 13px; background: #e6e6e6; border: 1px solid #aaa; }
.thumb-date { left: 63px; }
.thumb-time { left: 68px; }
.ticks {
  display: flex;
  justify-content: space-between;
  padding: 2px 3px 0;
  font-family: "Liberation Sans Narrow", "Liberation Sans", "Noto Sans CJK SC", sans-serif;
  font-size: 10.5px;
  line-height: 11px;
  color: #222;
}
.slider-time .ticks { padding: 2px 0 0; }

/* main */
.main { display: flex; flex: 1; min-height: 0; }
.lefttools {
  width: 72px;
  flex: none;
  padding-top: 44px;
  background: #f0f0f0;
}
.hgrip { height: 0; margin: 0 4px 3px; border-top: 2px dotted #adadad; }
.lgrid { display: grid; grid-template-columns: 33px 33px; grid-auto-rows: 34px; padding-left: 2px; }
.ltool { display: flex; align-items: center; justify-content: center; }
.ltool .ic { width: 27px; height: 27px; }
.lsep { height: 1px; margin: 2px 4px 5px; background: #a8a8a8; }
.lend { height: 1px; margin-top: 1px; background: #b8b8b8; }

.canvas {
  position: relative;
  flex: 1;
  min-width: 0;
  background: #fff;
  border-top: 2px solid #707070;
  border-left: 2px solid #707070;
}
.scene { display: block; width: 1842px; height: 893px; }
.axes path { fill: none; stroke-width: 1; }
.ax-blue { stroke: #9c9ce0; }
.ax-blue-dark { stroke: #7070b4; }
.ax-blue-dot { stroke: #c0c0ea; stroke-dasharray: 1 2; }
.ax-red { stroke: #d84a50; }
.ax-red-dot { stroke: #e2bcc0; stroke-dasharray: 1 2; }
.ax-green { stroke: #3ab84a; }
.ax-green-dot { stroke: #c4dcc4; stroke-dasharray: 1 2; }
.face { fill: #7f0000; stroke: #000; stroke-width: 1.5; stroke-linejoin: round; }
.top { fill: #380000; stroke: #000; stroke-width: 1.5; stroke-linejoin: round; }
.edge { fill: none; stroke: #000; stroke-width: 1; }
.callout { fill: none; stroke: #ff3333; stroke-width: 3; }
.arrow { fill: #7f0000; }
.note {
  position: absolute;
  left: 1222px;
  top: 278px;
  margin: 0;
  font-family: "Noto Sans CJK SC", sans-serif;
  font-size: 29px;
  line-height: 36px;
  color: #ff3b3b;
  white-space: nowrap;
}
.note b { font-family: "Liberation Sans", sans-serif; font-weight: 700; }

/* status bar */
.statusbar {
  display: flex;
  align-items: center;
  flex: none;
  height: 29px;
  padding-bottom: 1px;
  background: #f0f0f0;
  border-top: 1px solid #c7ccda;
  border-bottom: 1px solid #39414c;
}
.sicon { width: 24px; height: 24px; margin-right: 7px; flex: none; }
.ssep { width: 1px; height: 13px; background: #888; flex: none; margin-left: -1px; }
.shelp { width: 20px; height: 20px; margin-left: 5px; flex: none; }
.stext { margin-left: 15px; font-size: 15px; line-height: 20px; white-space: nowrap; color: #222; }
.vcb { display: flex; align-items: center; margin-left: auto; height: 100%; }
.vcb-label { margin-left: 11px; font-size: 14.5px; color: #111; width: 39px; }
.vcb-input {
  width: 200px;
  height: 25px;
  margin-right: 1px;
  padding: 3px 0 0 3px;
  background: #ffffe4;
  border: 1px solid #a9bad8;
  font-family: "Liberation Sans", sans-serif;
  font-size: 13px;
  line-height: 18px;
  color: #111;
}
.vcb-callout {
  position: absolute;
  right: 123px;
  bottom: 2px;
  width: 156px;
  height: 42px;
  border: 3px solid #ff3333;
  pointer-events: none;
}

/* icon letters */
.ict { font: bold 12px "Liberation Sans", sans-serif; fill: #111; }
.ictq { font: bold 19px "Liberation Sans", sans-serif; fill: #111; }
.icth { font: bold 16px "Liberation Sans", sans-serif; fill: #fff; }
.ictd { font: bold 9px "Liberation Sans", sans-serif; fill: #111; }
.ictm { font: bold 10px "Liberation Mono", monospace; fill: #111; }
```
